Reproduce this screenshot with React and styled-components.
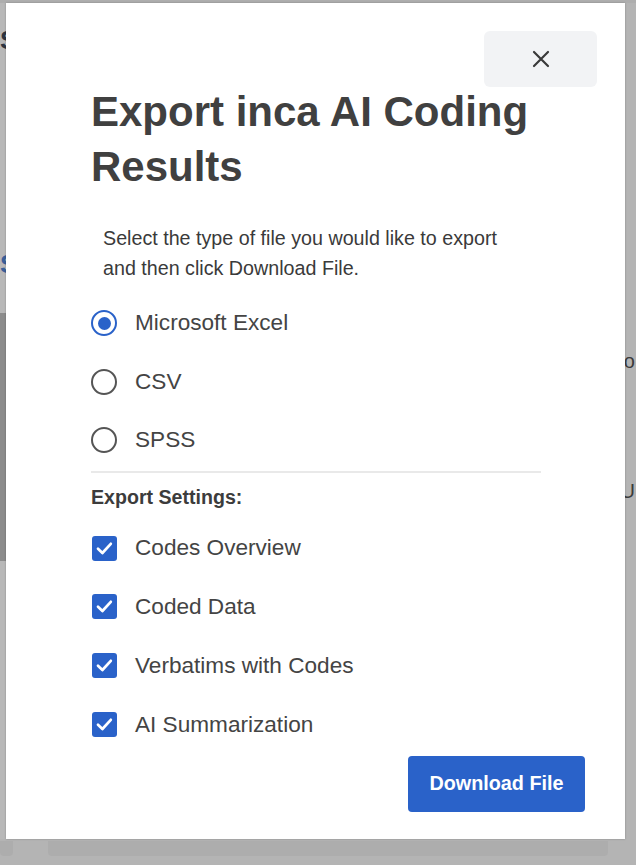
import React, { useState } from "react";
import styled, { createGlobalStyle } from "styled-components";

const GlobalStyle = createGlobalStyle`
  html, body {
    margin: 0;
    padding: 0;
  }
  body {
    background: #b4b4b4;
    font-family: "Liberation Sans", Arial, sans-serif;
  }
`;

const fileTypes = ["Microsoft Excel", "CSV", "SPSS"];
const settings = [
  "Codes Overview",
  "Coded Data",
  "Verbatims with Codes",
  "AI Summarization",
];

function CloseIcon() {
  return (
    <svg width="18" height="18" viewBox="0 0 18 18" fill="none">
      <path
        d="M2 2L16 16M16 2L2 16"
        stroke="#3a3a3a"
        strokeWidth="2.2"
        strokeLinecap="round"
      />
    </svg>
  );
}

function CheckIcon() {
  return (
    <svg width="21" height="21" viewBox="0 0 21 21" fill="none">
      <path
        d="M4 10.8L8.4 15L16.8 5.8"
        stroke="white"
        strokeWidth="2.7"
        strokeLinecap="round"
        strokeLinejoin="round"
      />
    </svg>
  );
}

export default function App() {
  const [fileType, setFileType] = useState("Microsoft Excel");
  const [checked, setChecked] = useState(settings);

  const toggle = (name) => {
    setChecked((prev) =>
      prev.includes(name) ? prev.filter((n) => n !== name) : [...prev, name]
    );
  };

  return (
    <>
      <GlobalStyle />
      <Page>
        <TopStrip />
        <PageBody>
          <SideBand>
            <PageGlyph>Su</PageGlyph>
            <PageGlyph $blue>Se</PageGlyph>
            <DarkBand />
          </SideBand>
          <PageMain />
          <RightCol>
            <PageText>Acco</PageText>
            <PageText>YOU</PageText>
          </RightCol>
        </PageBody>
        <BottomStrip>
          <BottomTab $w="13px" />
          <BottomTab $w="560px" />
        </BottomStrip>

        <Modal>
          <CloseButton aria-label="Close">
            <CloseIcon />
          </CloseButton>
          <Title>Export inca AI Coding Results</Title>
          <Description>
            Select the type of file you would like to export
            <br />
            and then click Download File.
          </Description>

          <OptionList>
            {fileTypes.map((t) => (
              <OptionRow key={t} onClick={() => setFileType(t)}>
                <Radio $selected={fileType === t} />
                <Label>{t}</Label>
              </OptionRow>
            ))}
          </OptionList>

          <Divider />
          <SectionTitle>Export Settings:</SectionTitle>

          <OptionList $top="10px">
            {settings.map((s) => (
              <OptionRow key={s} $h="58.8px" onClick={() => toggle(s)}>
                <Checkbox $checked={checked.includes(s)}>
                  {checked.includes(s) && <CheckIcon />}
                </Checkbox>
                <Label>{s}</Label>
              </OptionRow>
            ))}
          </OptionList>

          <Footer>
            <DownloadButton>Download File</DownloadButton>
          </Footer>
        </Modal>
      </Page>
    </>
  );
}

const Page = styled.div`
  position: relative;
  width: 636px;
  height: 865px;
  overflow: hidden;
  background: #b4b4b4;
  display: flex;
  flex-direction: column;
`;

const TopStrip = styled.div`
  height: 3px;
  background: #aeaeae;
`;

const PageBody = styled.div`
  flex: 1;
  display: flex;
`;

const SideBand = styled.div`
  width: 40px;
  display: flex;
  flex-direction: column;
  background: #b8b8b8;
`;

const PageGlyph = styled.span`
  font-size: 26px;
  font-weight: bold;
  line-height: 26px;
  color: ${(p) => (p.$blue ? "#3b5f9a" : "#2e3440")};
  margin-top: ${(p) => (p.$blue ? "198px" : "24px")};
`;

const DarkBand = styled.div`
  margin-top: 36px;
  height: 248px;
  background: #8c8c8c;
`;

const PageMain = styled.div`
  flex: 1;
`;

const RightCol = styled.div`
  width: 60px;
  display: flex;
  flex-direction: column;
  align-items: flex-end;
  padding: 346px 1px 0 0;
  gap: 106px;
`;

const PageText = styled.span`
  font-size: 20px;
  line-height: 24px;
  color: #3b3b3b;
`;

const BottomStrip = styled.div`
  height: 26px;
  display: flex;
  gap: 35px;
  padding-top: 2px;
  box-sizing: border-box;
`;

const BottomTab = styled.div`
  width: ${(p) => p.$w};
  height: 15px;
  background: #adadad;
  border-radius: 0 0 4px 4px;
`;

const Modal = styled.div`
  position: absolute;
  left: 6px;
  top: 3px;
  width: 619px;
  height: 836px;
  box-sizing: border-box;
  background: #ffffff;
  box-shadow: 0 0 2px rgba(0, 0, 0, 0.25);
  padding: 81px 40px 0 85px;
  display: flex;
  flex-direction: column;
  color: #424242;
`;

const CloseButton = styled.button`
  position: absolute;
  top: 28px;
  right: 28px;
  width: 113px;
  height: 56px;
  border: none;
  border-radius: 6px;
  background: #f2f3f5;
  display: flex;
  align-items: center;
  justify-content: center;
  cursor: pointer;
  padding: 0;
`;

const Title = styled.h2`
  margin: 0;
  width: 450px;
  font-size: 42px;
  line-height: 55px;
  font-weight: bold;
  color: #404040;
`;

const Description = styled.p`
  margin: 29px 0 0 12px;
  font-size: 19.7px;
  line-height: 30px;
  color: #3a3a3a;
`;

const OptionList = styled.div`
  display: flex;
  flex-direction: column;
  margin-top: ${(p) => p.$top || "11px"};
`;

const OptionRow = styled.label`
  height: ${(p) => p.$h || "58.6px"};
  display: flex;
  align-items: center;
  gap: 18px;
  cursor: pointer;
`;

const Radio = styled.span`
  width: 26px;
  height: 26px;
  box-sizing: border-box;
  border-radius: 50%;
  border: ${(p) => (p.$selected ? "2.5px solid #2a62c9" : "2px solid #555")};
  display: flex;
  align-items: center;
  justify-content: center;
  &::after {
    content: "";
    width: 13px;
    height: 13px;
    border-radius: 50%;
    background: ${(p) => (p.$selected ? "#2a62c9" : "transparent")};
  }
`;

const Checkbox = styled.span`
  width: 25px;
  height: 25px;
  margin-left: 1px;
  box-sizing: border-box;
  border-radius: 3px;
  background: ${(p) => (p.$checked ? "#2a62c9" : "#fff")};
  border: ${(p) => (p.$checked ? "none" : "2px solid #555")};
  display: flex;
  align-items: center;
  justify-content: center;
`;

const Label = styled.span`
  font-size: 22.6px;
  color: #444;
`;

const Divider = styled.div`
  width: 450px;
  height: 2px;
  background: #e9e9e9;
  margin-top: 1px;
`;

const SectionTitle = styled.div`
  margin-top: 12px;
  font-size: 19.6px;
  line-height: 24px;
  font-weight: bold;
  color: #3c3c3c;
`;

const Footer = styled.div`
  display: flex;
  justify-content: flex-end;
  margin-top: 2px;
`;

const DownloadButton = styled.button`
  width: 177px;
  height: 56px;
  border: none;
  border-radius: 4px;
  background: #2a62c9;
  color: #fff;
  font-family: "Liberation Sans", Arial, sans-serif;
  font-size: 19.8px;
  font-weight: bold;
  cursor: pointer;
`;
